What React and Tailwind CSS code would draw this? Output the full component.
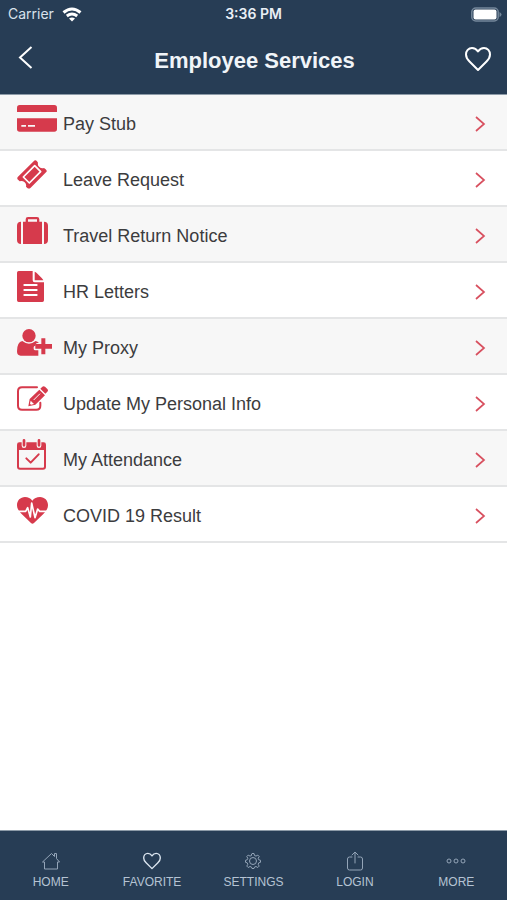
const RED = "#d63a4c";

const PayStubIcon = () => (
	<svg width="40" height="27" viewBox="0 0 120 81" fill={RED}>
		<path d="M8 0h104a8 8 0 0 1 8 8v13H0V8a8 8 0 0 1 8-8Z" />
		<path
			fillRule="evenodd"
			d="M0 40h120v32a8 8 0 0 1-8 8H8a8 8 0 0 1-8-8V40Zm13 20v5h14v-5H13Zm20 0v5h21v-5H33Z"
		/>
	</svg>
);

const TicketIcon = () => (
	<svg width="30" height="29" viewBox="0 0 90 87" fill="none">
		<path
			fill={RED}
			d="M50 4q5-6 10 0l3 4q-2 8 4 13 6 5 14 3l5 4q6 5 1 9L41 83q-5 5-10 1l-4-4q2-8-4-13-7-6-15-3l-4-4q-6-5-1-10Z"
		/>
		<path
			stroke="#fff"
			strokeWidth="5"
			strokeLinejoin="round"
			d="M53 17 71 35 37 69 19 51Z"
		/>
	</svg>
);

const SuitcaseIcon = () => (
	<svg width="31" height="27" viewBox="0 0 93 81" fill={RED}>
		<path d="M12 14v67q-12 0-12-12V26q0-12 12-12ZM81 14v67q12 0 12-12V26q0-12-12-12Z" />
		<path
			fillRule="evenodd"
			d="M18 14h8V7q0-7 7-7h27q7 0 7 7v7h8v67H18V14Zm15 0h27V7H33v7Z"
		/>
	</svg>
);

const LettersIcon = () => (
	<svg width="27" height="31" viewBox="0 0 81 93">
		<path
			fill={RED}
			d="M5 0h42v28q0 6 6 6h28v54q0 5-5 5H5q-5 0-5-5V5q0-5 5-5Z"
		/>
		<path fill={RED} d="M53 2q3 1 6 4l15 15q4 4 5 7H53V2Z" />
		<path
			stroke="#fff"
			strokeWidth="6"
			strokeLinecap="round"
			d="M22 42h37M22 57h37M22 72h37"
		/>
	</svg>
);

const ProxyIcon = () => (
	<svg width="35" height="27" viewBox="0 0 105 81" fill={RED}>
		<circle cx="36" cy="20" r="20" />
		<path d="M16 36q20 16 40 0 6 1 10 6h-5q-5 0-5 5v3h-1q-5 0-5 5v4q0 5 5 5h9v16H11Q0 80 0 67 0 39 16 36Z" />
		<path d="M73 28h12v17h20v14H85v17H73V59H55V45h18V28Z" />
	</svg>
);

const UpdateIcon = () => (
	<svg width="32" height="25" viewBox="0 0 96 75" fill="none">
		<path
			stroke={RED}
			strokeWidth="6"
			strokeLinecap="round"
			d="M60 4H15Q3 4 3 16v43q0 12 12 12h43q12 0 12-12v-9"
		/>
		<path
			fill={RED}
			d="M34 61l4-22 29-28 17 17-29 28-21 5ZM70 8l6-6q4-3 8 0l7 7q4 4 0 8l-6 6L70 8Z"
		/>
		<path stroke="#fff" strokeWidth="3" d="M50 42 69 23" />
		<path fill="#fff" d="m41 44 10 10-9 2-3-3Z" />
	</svg>
);

const AttendanceIcon = () => (
	<svg width="29" height="31" viewBox="0 0 87 93" fill="none">
		<path
			stroke={RED}
			strokeWidth="6"
			d="M3 20v63q0 6 6 6h69q6 0 6-6V20"
		/>
		<path
			fill={RED}
			d="M7 10h7v10q0 7 7 7t7-7V10h31v10q0 7 7 7t7-7V10h7q7 0 7 7v16H0V17q0-7 7-7Z"
		/>
		<path
			stroke={RED}
			strokeWidth="8"
			strokeLinecap="round"
			d="M21 4v15M66 4v15"
		/>
		<path
			stroke={RED}
			strokeWidth="6"
			strokeLinecap="round"
			strokeLinejoin="round"
			d="m28 58 13 13 24-25"
		/>
	</svg>
);

const CovidIcon = () => (
	<svg width="31" height="27" viewBox="0 0 93 81" fill="none">
		<path
			fill={RED}
			d="M46 11Q54 0 69 0c14 0 24 11 24 24 0 11-6 19-14 27L51 78q-5 4-9 0L14 51C6 43 0 35 0 24 0 11 10 0 24 0q14 0 22 11Z"
		/>
		<path
			stroke="#fff"
			strokeWidth="5"
			strokeLinejoin="round"
			d="M2 43h24l6-11 8 28 4-42 10 44 8-26 6 7h23"
		/>
	</svg>
);

const HeartIcon = ({ size, strokeWidth }) => (
	<svg
		width={size}
		height={size}
		viewBox="0 0 26 26"
		fill="none"
		stroke="currentColor"
		strokeWidth={strokeWidth}
		strokeLinejoin="round"
	>
		<path d="M13 5.500C11 2.500 8.500 2 7 2 3.500 2 1 5 1 8.500c0 3 1.500 5 3.500 7L13 24l8.500-8.500c2-2 3.500-4 3.500-7C25 5 22.500 2 19 2c-1.500 0-4 .5-6 3.500Z" />
	</svg>
);

const HomeIcon = () => (
	<svg width="20" height="20" viewBox="0 0 20 20" fill="none" stroke="currentColor">
		<path
			strokeLinejoin="round"
			d="M3.500 11v7h13v-7H18.500L15.500 7.500V2.500h-2v3L10.500 2.500 1.500 11h2Z"
		/>
	</svg>
);

const SettingsIcon = () => (
	<svg width="20" height="20" viewBox="0 0 20 20" fill="none" stroke="currentColor">
		<path
			strokeLinejoin="round"
			d="m8.500 3 .5-.5h2l.5 2 1.500.6 1.800-1 1.400 1.400-1 1.800.6 1.500 1.700.5v2l-1.700.5-.6 1.500 1 1.800-1.400 1.400-1.800-1-1.500.6-.5 1.400H9l-.5-1.400-1.500-.6-1.800 1-1.400-1.400 1-1.800-.6-1.500-1.700-.5v-2l1.700-.5.6-1.500-1-1.800 1.400-1.400 1.800 1 1.500-.6Z"
		/>
		<circle cx="10" cy="10" r="3.500" />
	</svg>
);

const LoginIcon = () => (
	<svg width="20" height="20" viewBox="0 0 20 20" fill="none" stroke="currentColor">
		<path
			strokeLinecap="round"
			strokeLinejoin="round"
			d="M7 6H4.500Q2.500 6 2.500 8v9q0 2 2 2h11q2 0 2-2V8q0-2-2-2H13M10 12V1.500M7 4l3-3 3 3"
		/>
	</svg>
);

const MoreIcon = () => (
	<svg width="20" height="20" viewBox="0 0 20 20" fill="none" stroke="currentColor">
		<circle cx="3" cy="10" r="2" />
		<circle cx="10" cy="10" r="2" />
		<circle cx="17" cy="10" r="2" />
	</svg>
);

const services = [
	{ label: "Pay Stub", Icon: PayStubIcon },
	{ label: "Leave Request", Icon: TicketIcon },
	{ label: "Travel Return Notice", Icon: SuitcaseIcon },
	{ label: "HR Letters", Icon: LettersIcon },
	{ label: "My Proxy", Icon: ProxyIcon },
	{ label: "Update My Personal Info", Icon: UpdateIcon },
	{ label: "My Attendance", Icon: AttendanceIcon },
	{ label: "COVID 19 Result", Icon: CovidIcon },
];

const tabs = [
	{ label: "HOME", icon: <HomeIcon /> },
	{
		label: "FAVORITE",
		icon: <HeartIcon size={18} strokeWidth={2} />,
		active: true,
	},
	{ label: "SETTINGS", icon: <SettingsIcon /> },
	{ label: "LOGIN", icon: <LoginIcon /> },
	{ label: "MORE", icon: <MoreIcon /> },
];

const StatusBar = () => (
	<div className="grid grid-cols-3 items-center h-7 px-1 text-white font-['Inter','Liberation_Sans',sans-serif]">
		<div className="flex items-center gap-2 pl-1 text-sm text-[#d9e2ec]">
			<span>Carrier</span>
			<svg width="20" height="15" viewBox="0 0 20 15" fill="none" stroke="#fff" strokeWidth="3">
				<path d="M1.500 5.500q8.500-7 17 0M4.800 9q5.200-4 10.400 0" />
				<path fill="#fff" stroke="none" d="M7 11.500q3-2 6 0L10 14.500Z" />
			</svg>
		</div>
		<p className="text-center text-sm font-semibold text-[#e9eff5]">
			3:36 PM
		</p>
		<svg className="justify-self-end" width="32" height="15" viewBox="0 0 32 15">
			<rect x=".8" y="1" width="26.400" height="13" rx="4" fill="none" stroke="#74879a" strokeWidth="1.500" />
			<rect x="2.500" y="2.500" width="23" height="10" rx="2" fill="#fff" />
			<path fill="#74879a" d="M28.500 5q2 1 2 2.500t-2 2.500Z" />
		</svg>
	</div>
);

const ServiceRow = ({ label, Icon }) => (
	<li className="border-b-2 border-[#e4e5e6] odd:bg-[#f7f7f7] even:bg-white">
		<a href="#" className="flex items-center h-[54px] pt-[3px] pl-[17px] pr-[21px]">
			<span className="w-[46px] shrink-0 pb-[10px]">
				<Icon />
			</span>
			<span className="flex-1 text-lg text-[#3c3c3e]">{label}</span>
			<svg
				width="12"
				height="18"
				viewBox="0 0 12 18"
				fill="none"
				stroke="#d8505f"
				strokeWidth="1.700"
			>
				<path d="m2 2 8 7-8 7" />
			</svg>
		</a>
	</li>
);

const App = () => {
	return (
		<div className="flex flex-col min-h-screen bg-white font-['Liberation_Sans',Arial,sans-serif]">
			<header className="bg-[#273d55] border-b border-[#8d9ba8]">
				<StatusBar />
				<div className="flex items-center justify-between h-[66px] px-4 text-white">
					<button type="button" aria-label="Back" className="w-7 pb-2">
						<svg width="18" height="25" viewBox="0 0 18 25" fill="none" stroke="currentColor" strokeWidth="2">
							<path d="M15.500 2 4 12.500 15.500 23" />
						</svg>
					</button>
					<h1 className="pb-0.5 text-[22px] font-bold text-[#f0f4f8]">
						Employee Services
					</h1>
					<button type="button" aria-label="Add to favorites" className="pb-1">
						<HeartIcon size={26} strokeWidth={2} />
					</button>
				</div>
			</header>

			<main className="flex-1">
				<ul>
					{services.map(service => (
						<ServiceRow key={service.label} {...service} />
					))}
				</ul>
			</main>

			<nav className="grid grid-cols-5 bg-[#273d55] border-t border-[#8d9ba8] pt-5 pb-[10px]">
				{tabs.map(({ label, icon, active }) => (
					<a
						key={label}
						href="#"
						className="flex flex-col items-center gap-[3px] text-[#b5c3d3]"
					>
						<span
							className={
								active
									? "flex items-center h-5 text-[#dce6f0]"
									: "flex items-center h-5 text-[#94a5b8]"
							}
						>
							{icon}
						</span>
						<span className="text-xs">{label}</span>
					</a>
				))}
			</nav>
		</div>
	);
};

export default App;
